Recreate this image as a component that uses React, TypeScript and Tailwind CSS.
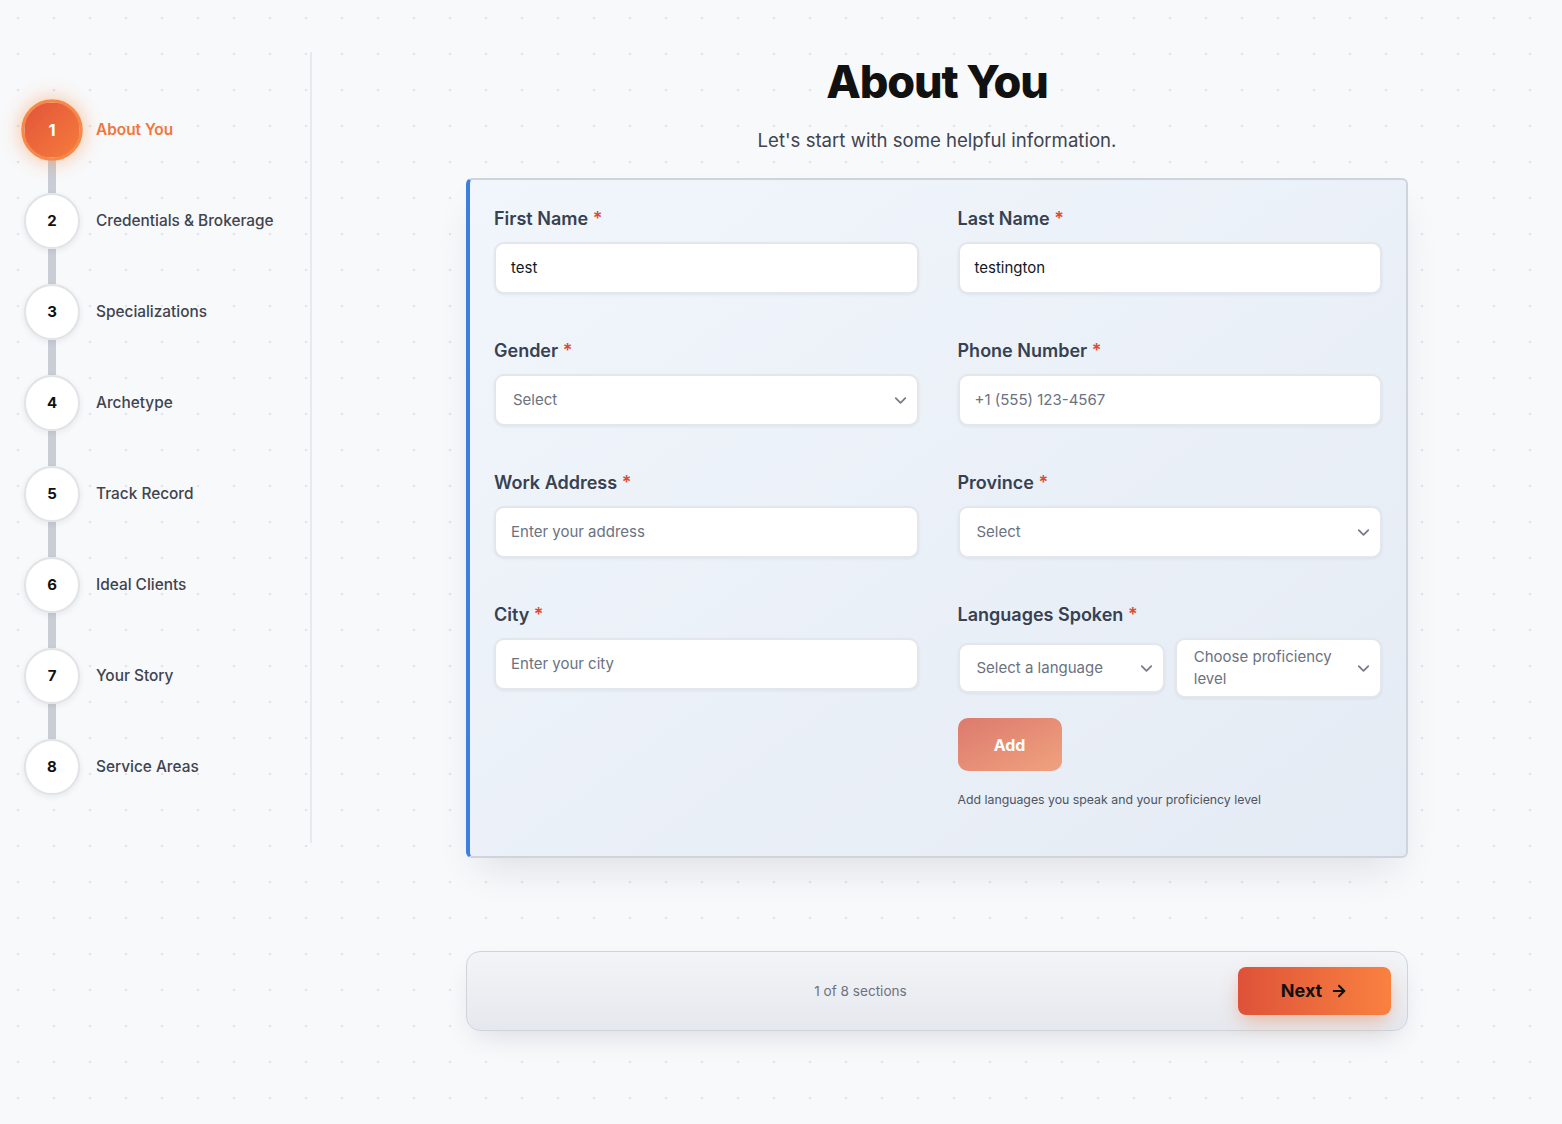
import { ArrowRight, ChevronDown } from 'lucide-react';

const steps = [
    'About You',
    'Credentials & Brokerage',
    'Specializations',
    'Archetype',
    'Track Record',
    'Ideal Clients',
    'Your Story',
    'Service Areas',
];

const Label = ({ children }: { children: React.ReactNode }) => (
    <label className="block text-lg leading-7 font-semibold text-[#374151] mb-[9px]">
        {children} <span className="text-[#dc4a32]">*</span>
    </label>
);

const TextInput = ({ value, placeholder }: { value?: string; placeholder?: string }) => (
    <div className="h-[52px] flex items-center px-[15px] bg-white rounded-[10px] border-2 border-[#e3e6eb] shadow-[0_1px_3px_rgba(15,23,42,0.06)] text-[15px]">
        {value ? (
            <span className="text-[#111827]">{value}</span>
        ) : (
            <span className="text-[#6b7280]">{placeholder}</span>
        )}
    </div>
);

const SelectBox = ({ text, className = 'h-[52px]' }: { text: string; className?: string }) => (
    <div
        className={`${className} flex items-center justify-between pl-[17px] pr-[7px] bg-white rounded-[10px] border-2 border-[#e3e6eb] shadow-[0_1px_3px_rgba(15,23,42,0.06)] text-[15px] text-[#6b7280]`}
    >
        <span className="leading-[22px]">{text}</span>
        <ChevronDown size={19} strokeWidth={2.25} className="text-[#777c85] shrink-0" />
    </div>
);

export default function App() {
    return (
        <div className="min-h-screen bg-[#f8f9fb] bg-[radial-gradient(circle,#dfe2e8_1.1px,transparent_1.6px)] bg-[size:36px_36px] font-['Inter',sans-serif] text-[#111827]">
            <div className="flex">
                {/* Sidebar stepper */}
                <aside className="w-[312px] shrink-0 mt-[52px] h-[791px] border-r-2 border-[#e7e9ed] pt-[50px] pl-6">
                    {steps.map((name, i) => {
                        const active = i === 0;
                        return (
                            <div key={name}>
                                {i > 0 && <div className="ml-6 w-2 h-[35px] bg-[#c8cdd6]" />}
                                <div className="flex items-center gap-4">
                                    {active ? (
                                        <div className="w-14 h-14 scale-110 rounded-full flex items-center justify-center bg-gradient-to-br from-[#e2543a] to-[#f67c3c] border-[3px] border-[#f5894b] shadow-[0_0_18px_rgba(249,115,22,0.45)] text-white font-bold text-[15px]">
                                            {i + 1}
                                        </div>
                                    ) : (
                                        <div className="w-14 h-14 rounded-full flex items-center justify-center bg-white border-2 border-[#e1e3e7] shadow-[0_2px_6px_rgba(15,23,42,0.08)] text-[#111] font-bold text-[15px]">
                                            {i + 1}
                                        </div>
                                    )}
                                    <span
                                        className={
                                            active
                                                ? 'text-[15.4px] font-semibold text-[#f0763a]'
                                                : 'text-[15.4px] font-medium text-[#3f4450]'
                                        }
                                    >
                                        {name}
                                    </span>
                                </div>
                            </div>
                        );
                    })}
                </aside>

                {/* Main */}
                <main className="flex-1 flex flex-col items-center pt-[59px] pb-[92px]">
                    <h1 className="text-[45px] leading-none font-extrabold tracking-tight text-[#111]">About You</h1>
                    <p className="mt-[22px] text-[18.6px] leading-7 text-[#3f4450]">Let's start with some helpful information.</p>

                    <div className="mt-6 w-[942px] rounded-md border-2 border-l-4 border-[#cfd4dc] border-l-[#3d7fdc] bg-gradient-to-br from-[#f1f6fc] to-[#e5ebf4] shadow-[0_20px_40px_-12px_rgba(15,23,42,0.12)] pl-6 pr-6 pt-[25px] pb-12">
                        <div className="grid grid-cols-2 gap-x-[39px] gap-y-[43px]">
                            <div>
                                <Label>First Name</Label>
                                <TextInput value="test" />
                            </div>
                            <div>
                                <Label>Last Name</Label>
                                <TextInput value="testington" />
                            </div>
                            <div>
                                <Label>Gender</Label>
                                <SelectBox text="Select" />
                            </div>
                            <div>
                                <Label>Phone Number</Label>
                                <TextInput placeholder="+1 (555) 123-4567" />
                            </div>
                            <div>
                                <Label>Work Address</Label>
                                <TextInput placeholder="Enter your address" />
                            </div>
                            <div>
                                <Label>Province</Label>
                                <SelectBox text="Select" />
                            </div>
                            <div>
                                <Label>City</Label>
                                <TextInput placeholder="Enter your city" />
                            </div>
                            <div>
                                <Label>Languages Spoken</Label>
                                <div className="flex items-center gap-[10px]">
                                    <div className="flex-1">
                                        <SelectBox text="Select a language" className="h-[50px]" />
                                    </div>
                                    <div className="flex-1">
                                        <SelectBox text="Choose proficiency level" className="h-[60px]" />
                                    </div>
                                </div>
                                <button className="mt-5 w-[104px] h-[53px] rounded-[10px] bg-gradient-to-br from-[#dc7a6e] to-[#f0a27e] text-white font-bold text-base">
                                    Add
                                </button>
                                <p className="mt-[21px] text-[12.3px] leading-4 text-[#4b5563]">
                                    Add languages you speak and your proficiency level
                                </p>
                            </div>
                        </div>
                    </div>

                    {/* Footer nav */}
                    <div className="mt-[93px] w-[942px] h-[80px] rounded-[14px] border border-[#cfd3da] bg-gradient-to-b from-[#f3f4f7] to-[#e5e8ee] shadow-[0_12px_30px_-10px_rgba(15,23,42,0.15)] flex items-center px-4">
                        <div className="flex-1 text-center text-[13.6px] text-[#6b7280]">1 of 8 sections</div>
                        <button className="w-[153px] h-12 rounded-lg bg-gradient-to-r from-[#de5239] to-[#f98140] shadow-[0_8px_20px_-4px_rgba(234,88,12,0.4)] flex items-center justify-center gap-2 text-lg font-bold text-[#111]">
                            Next
                            <ArrowRight size={18} strokeWidth={2.75} />
                        </button>
                    </div>
                </main>
            </div>
        </div>
    );
}
